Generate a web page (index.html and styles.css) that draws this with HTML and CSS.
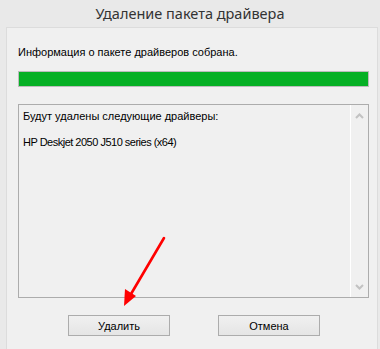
FILE: index.html
```html
<!DOCTYPE html>
<html lang="ru">
<head>
    <meta charset="UTF-8">
    <title>Удаление пакета драйвера</title>
    <link rel="stylesheet" href="styles.css">
</head>
<body>
    <div class="dialog">
        <h1 class="title">Удаление пакета драйвера</h1>
        <div class="panel">
            <p class="status">Информация о пакете драйверов собрана.</p>
            <div class="progress"><div class="progress-fill"></div></div>

            <div class="listbox">
                <div class="list-items">
                    <div class="list-line">Будут удалены следующие драйверы:</div>
                    <div class="list-line device-name">HP Deskjet 2050 J510 series (x64)</div>
                </div>
                <div class="scrollbar">
                    <svg class="chevron" width="9" height="6" viewBox="0 0 9 6"><path d="M1 5 L4.5 1.5 L8 5" fill="none" stroke="#c2c2c2" stroke-width="2"/></svg>
                    <svg class="chevron" width="9" height="6" viewBox="0 0 9 6"><path d="M1 1 L4.5 4.5 L8 1" fill="none" stroke="#c2c2c2" stroke-width="2"/></svg>
                </div>
            </div>

            <div class="buttons">
                <button class="btn">Удалить</button>
                <button class="btn">Отмена</button>
            </div>
        </div>

        <!-- red pointer over the dialog -->
        <svg class="pointer" width="380" height="349" viewBox="0 0 380 349">
            <line x1="164" y1="238" x2="131" y2="294" stroke="#ff0000" stroke-width="2.6" stroke-linecap="round"/>
            <polygon points="124,306 125,289 136,296" fill="#ff0000"/>
        </svg>
    </div>
</body>
</html>
```

FILE: styles.css
```css
body {
    margin: 0;
    background-color: #e9e9e9;
    font-family: 'Liberation Sans', Arial, sans-serif;
    color: #000;
}
.dialog {
    position: relative;
    width: 380px;
    height: 349px;
    overflow: hidden;
}
.title {
    margin: 0;
    height: 27px;
    line-height: 26px;
    text-align: center;
    font-family: 'Noto Sans', 'Open Sans', sans-serif;
    font-size: 14.5px;
    font-weight: normal;
    color: #333;
}
.panel {
    margin: 0 2px 0 6px;
    height: 330px;
    background-color: #f0f0f0;
    border: 1px solid #dcdcdc;
    padding: 16px 8px 0 11px;
}
.status {
    margin: 0;
    font-size: 11px;
    line-height: 16px;
}
.progress {
    margin-top: 11px;
    height: 14px;
    border: 1px solid #bcbcbc;
    background-color: #e6e6e6;
}
.progress-fill {
    width: 100%;
    height: 100%;
    background-color: #06b025;
}
.listbox {
    margin-top: 17px;
    height: 192px;
    border: 1px solid #acacac;
    background-color: #f0f0f0;
    display: flex;
}
.list-items {
    flex: 1;
    padding: 3px 4px;
    font-size: 11px;
}
.list-line {
    line-height: 16px;
    margin-bottom: 10px;
}
.device-name {
    letter-spacing: -0.5px; /* latin text runs narrower in the original */
}
.scrollbar {
    width: 17px;
    border-left: 1px solid #fff;
    display: flex;
    flex-direction: column;
    justify-content: space-between;
    align-items: center;
    padding: 8px 0 7px;
}
.buttons {
    display: flex;
    justify-content: center;
    gap: 48px;
    margin-top: 17px;
    padding-left: 1px;
}
.btn {
    width: 102px;
    height: 21px;
    border: 1px solid #acacac;
    background: linear-gradient(#f0f0f0, #e5e5e5);
    font-family: 'Liberation Sans', Arial, sans-serif;
    font-size: 11px;
    color: #000;
    padding: 0;
}
.pointer {
    position: absolute;
    left: 0;
    top: 0;
    pointer-events: none;
}
```
